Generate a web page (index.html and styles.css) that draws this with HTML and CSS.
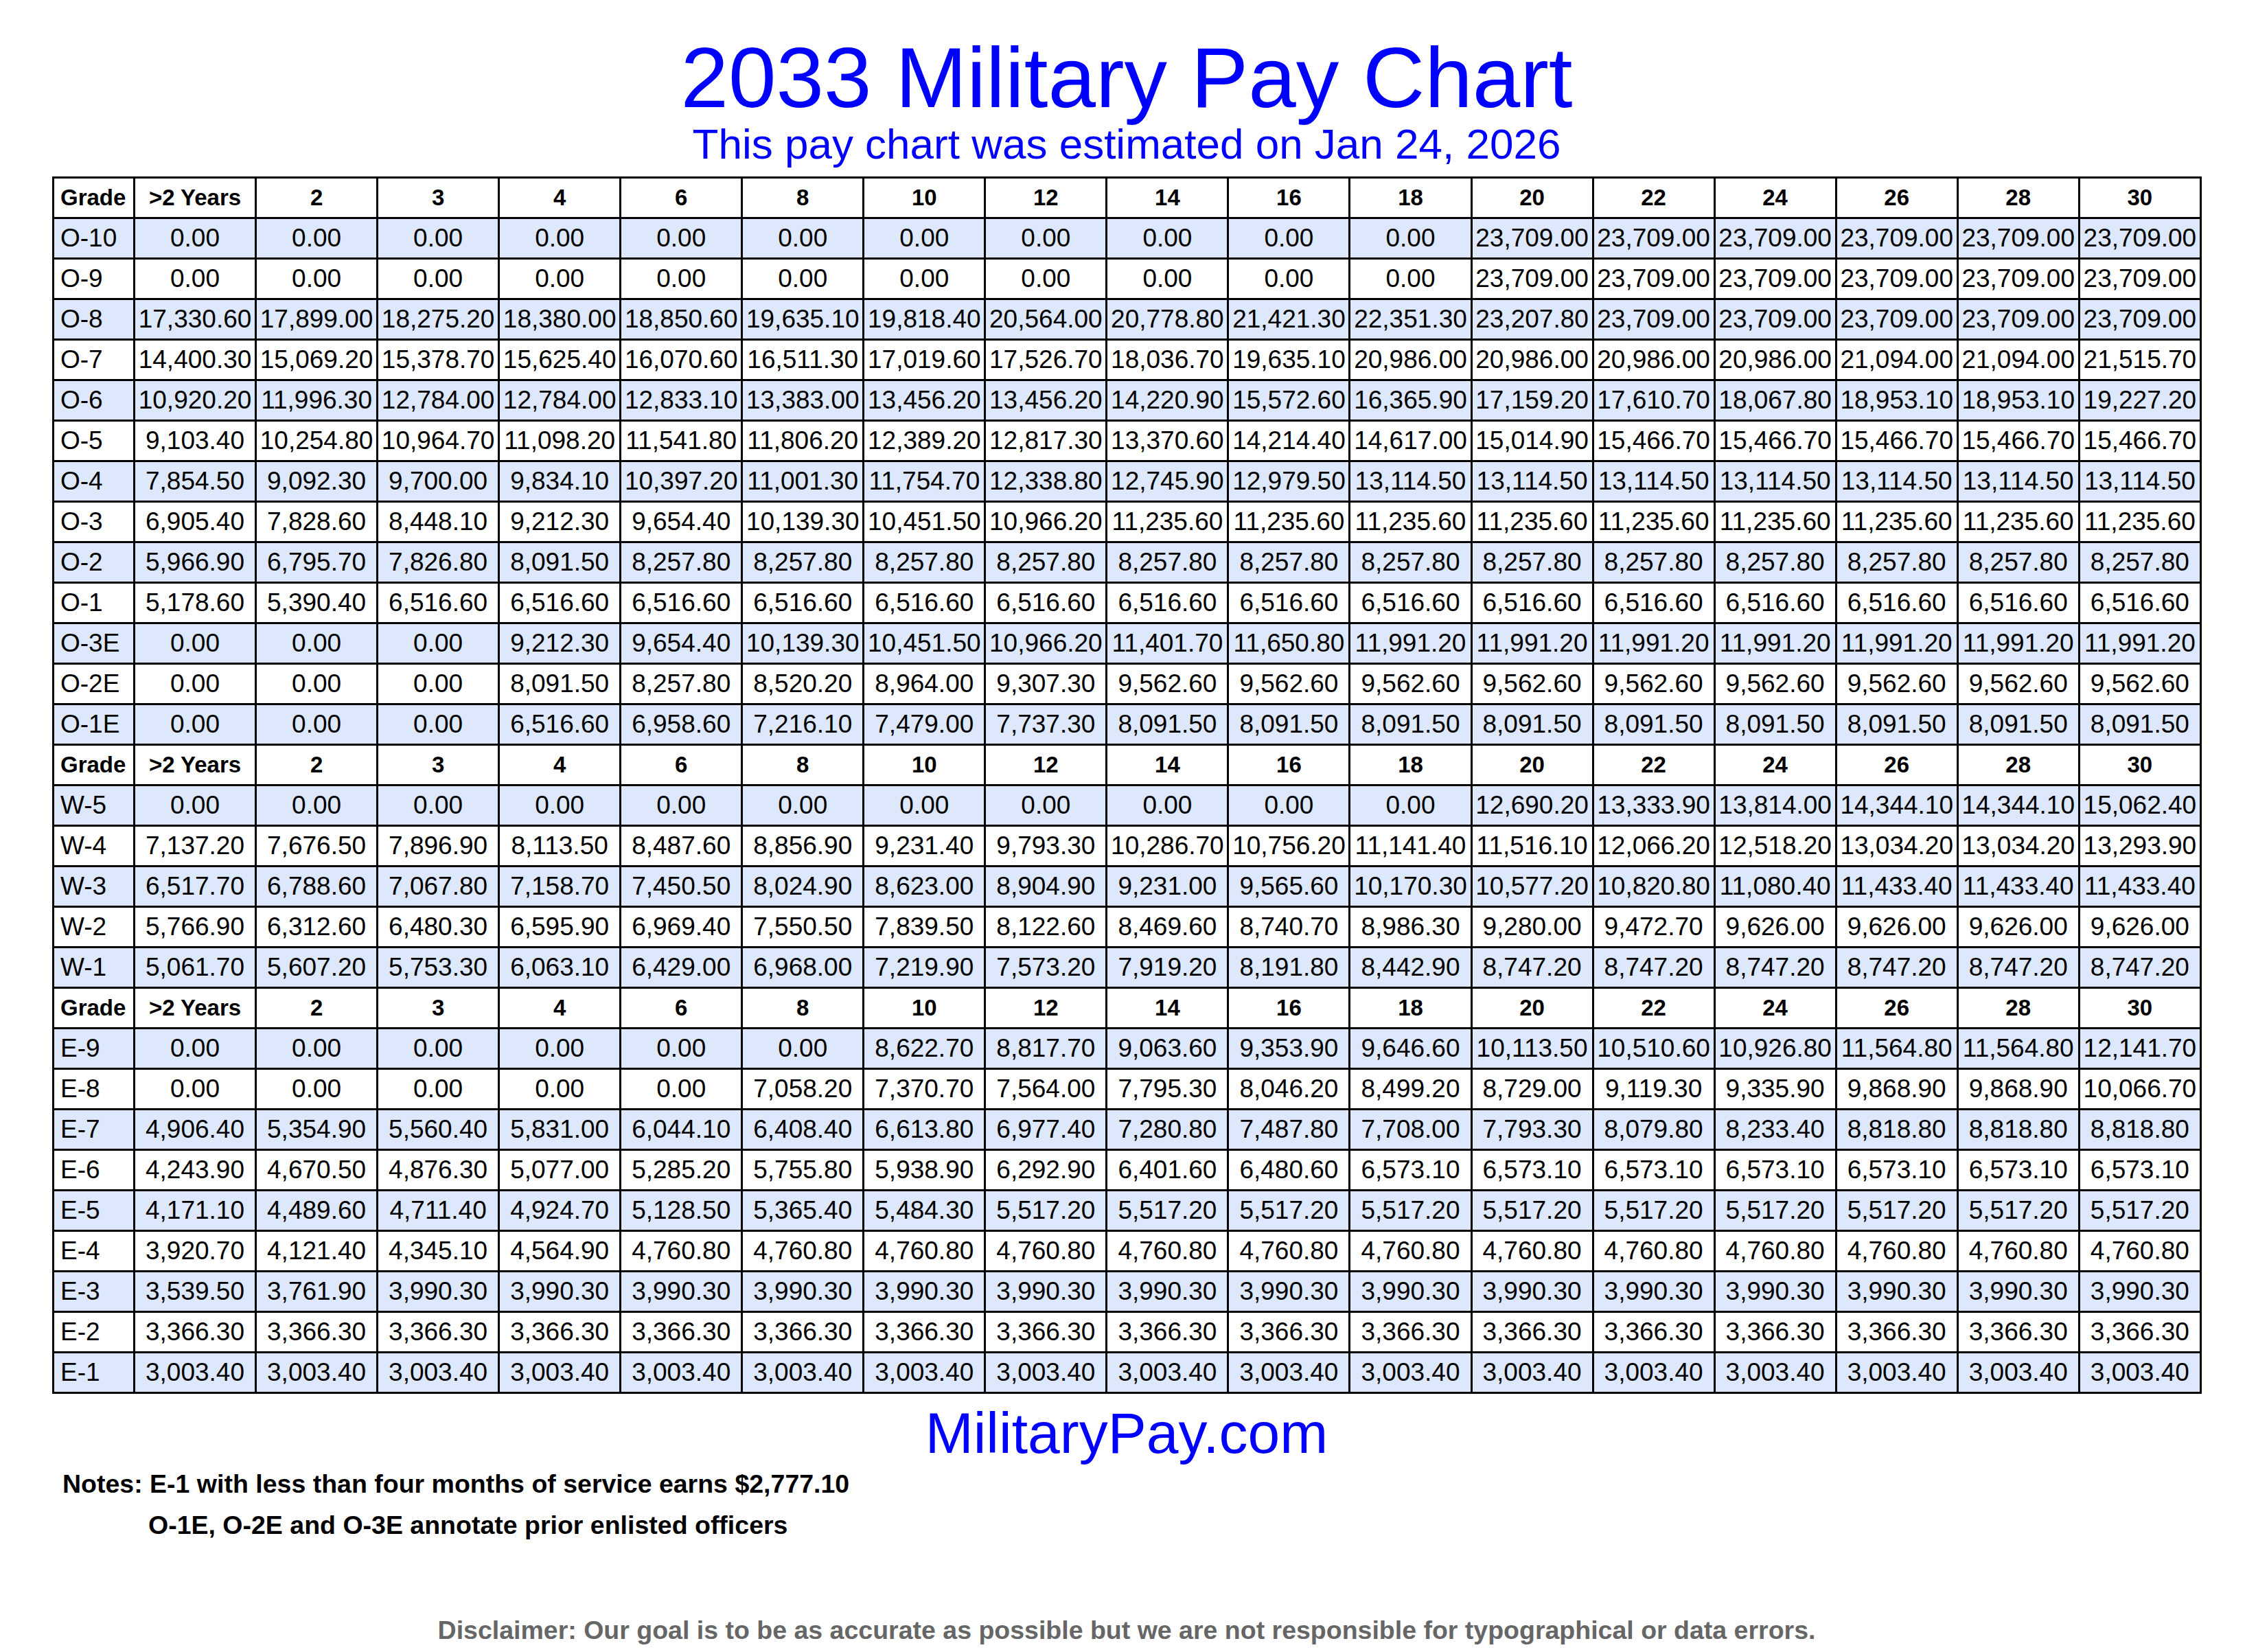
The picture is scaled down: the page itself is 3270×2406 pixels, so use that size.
FILE: index.html
```html
<!DOCTYPE html>
<html lang="en">
<head>
<meta charset="utf-8">
<title>2033 Military Pay Chart</title>
<link rel="stylesheet" href="styles.css">
</head>
<body>
<div class="page">
  <h1 class="title">2033 Military Pay Chart</h1>
  <p class="subtitle">This pay chart was estimated on Jan 24, 2026</p>
  <table class="pay">
    <colgroup><col class="c-grade"><col span="17"></colgroup>
    <tbody>
      <tr class="head"><th>Grade</th><th>&gt;2 Years</th><th>2</th><th>3</th><th>4</th><th>6</th><th>8</th><th>10</th><th>12</th><th>14</th><th>16</th><th>18</th><th>20</th><th>22</th><th>24</th><th>26</th><th>28</th><th>30</th></tr>
      <tr><td>O-10</td><td>0.00</td><td>0.00</td><td>0.00</td><td>0.00</td><td>0.00</td><td>0.00</td><td>0.00</td><td>0.00</td><td>0.00</td><td>0.00</td><td>0.00</td><td>23,709.00</td><td>23,709.00</td><td>23,709.00</td><td>23,709.00</td><td>23,709.00</td><td>23,709.00</td></tr>
      <tr><td>O-9</td><td>0.00</td><td>0.00</td><td>0.00</td><td>0.00</td><td>0.00</td><td>0.00</td><td>0.00</td><td>0.00</td><td>0.00</td><td>0.00</td><td>0.00</td><td>23,709.00</td><td>23,709.00</td><td>23,709.00</td><td>23,709.00</td><td>23,709.00</td><td>23,709.00</td></tr>
      <tr><td>O-8</td><td>17,330.60</td><td>17,899.00</td><td>18,275.20</td><td>18,380.00</td><td>18,850.60</td><td>19,635.10</td><td>19,818.40</td><td>20,564.00</td><td>20,778.80</td><td>21,421.30</td><td>22,351.30</td><td>23,207.80</td><td>23,709.00</td><td>23,709.00</td><td>23,709.00</td><td>23,709.00</td><td>23,709.00</td></tr>
      <tr><td>O-7</td><td>14,400.30</td><td>15,069.20</td><td>15,378.70</td><td>15,625.40</td><td>16,070.60</td><td>16,511.30</td><td>17,019.60</td><td>17,526.70</td><td>18,036.70</td><td>19,635.10</td><td>20,986.00</td><td>20,986.00</td><td>20,986.00</td><td>20,986.00</td><td>21,094.00</td><td>21,094.00</td><td>21,515.70</td></tr>
      <tr><td>O-6</td><td>10,920.20</td><td>11,996.30</td><td>12,784.00</td><td>12,784.00</td><td>12,833.10</td><td>13,383.00</td><td>13,456.20</td><td>13,456.20</td><td>14,220.90</td><td>15,572.60</td><td>16,365.90</td><td>17,159.20</td><td>17,610.70</td><td>18,067.80</td><td>18,953.10</td><td>18,953.10</td><td>19,227.20</td></tr>
      <tr><td>O-5</td><td>9,103.40</td><td>10,254.80</td><td>10,964.70</td><td>11,098.20</td><td>11,541.80</td><td>11,806.20</td><td>12,389.20</td><td>12,817.30</td><td>13,370.60</td><td>14,214.40</td><td>14,617.00</td><td>15,014.90</td><td>15,466.70</td><td>15,466.70</td><td>15,466.70</td><td>15,466.70</td><td>15,466.70</td></tr>
      <tr><td>O-4</td><td>7,854.50</td><td>9,092.30</td><td>9,700.00</td><td>9,834.10</td><td>10,397.20</td><td>11,001.30</td><td>11,754.70</td><td>12,338.80</td><td>12,745.90</td><td>12,979.50</td><td>13,114.50</td><td>13,114.50</td><td>13,114.50</td><td>13,114.50</td><td>13,114.50</td><td>13,114.50</td><td>13,114.50</td></tr>
      <tr><td>O-3</td><td>6,905.40</td><td>7,828.60</td><td>8,448.10</td><td>9,212.30</td><td>9,654.40</td><td>10,139.30</td><td>10,451.50</td><td>10,966.20</td><td>11,235.60</td><td>11,235.60</td><td>11,235.60</td><td>11,235.60</td><td>11,235.60</td><td>11,235.60</td><td>11,235.60</td><td>11,235.60</td><td>11,235.60</td></tr>
      <tr><td>O-2</td><td>5,966.90</td><td>6,795.70</td><td>7,826.80</td><td>8,091.50</td><td>8,257.80</td><td>8,257.80</td><td>8,257.80</td><td>8,257.80</td><td>8,257.80</td><td>8,257.80</td><td>8,257.80</td><td>8,257.80</td><td>8,257.80</td><td>8,257.80</td><td>8,257.80</td><td>8,257.80</td><td>8,257.80</td></tr>
      <tr><td>O-1</td><td>5,178.60</td><td>5,390.40</td><td>6,516.60</td><td>6,516.60</td><td>6,516.60</td><td>6,516.60</td><td>6,516.60</td><td>6,516.60</td><td>6,516.60</td><td>6,516.60</td><td>6,516.60</td><td>6,516.60</td><td>6,516.60</td><td>6,516.60</td><td>6,516.60</td><td>6,516.60</td><td>6,516.60</td></tr>
      <tr><td>O-3E</td><td>0.00</td><td>0.00</td><td>0.00</td><td>9,212.30</td><td>9,654.40</td><td>10,139.30</td><td>10,451.50</td><td>10,966.20</td><td>11,401.70</td><td>11,650.80</td><td>11,991.20</td><td>11,991.20</td><td>11,991.20</td><td>11,991.20</td><td>11,991.20</td><td>11,991.20</td><td>11,991.20</td></tr>
      <tr><td>O-2E</td><td>0.00</td><td>0.00</td><td>0.00</td><td>8,091.50</td><td>8,257.80</td><td>8,520.20</td><td>8,964.00</td><td>9,307.30</td><td>9,562.60</td><td>9,562.60</td><td>9,562.60</td><td>9,562.60</td><td>9,562.60</td><td>9,562.60</td><td>9,562.60</td><td>9,562.60</td><td>9,562.60</td></tr>
      <tr><td>O-1E</td><td>0.00</td><td>0.00</td><td>0.00</td><td>6,516.60</td><td>6,958.60</td><td>7,216.10</td><td>7,479.00</td><td>7,737.30</td><td>8,091.50</td><td>8,091.50</td><td>8,091.50</td><td>8,091.50</td><td>8,091.50</td><td>8,091.50</td><td>8,091.50</td><td>8,091.50</td><td>8,091.50</td></tr>
    </tbody>
    <tbody>
      <tr class="head"><th>Grade</th><th>&gt;2 Years</th><th>2</th><th>3</th><th>4</th><th>6</th><th>8</th><th>10</th><th>12</th><th>14</th><th>16</th><th>18</th><th>20</th><th>22</th><th>24</th><th>26</th><th>28</th><th>30</th></tr>
      <tr><td>W-5</td><td>0.00</td><td>0.00</td><td>0.00</td><td>0.00</td><td>0.00</td><td>0.00</td><td>0.00</td><td>0.00</td><td>0.00</td><td>0.00</td><td>0.00</td><td>12,690.20</td><td>13,333.90</td><td>13,814.00</td><td>14,344.10</td><td>14,344.10</td><td>15,062.40</td></tr>
      <tr><td>W-4</td><td>7,137.20</td><td>7,676.50</td><td>7,896.90</td><td>8,113.50</td><td>8,487.60</td><td>8,856.90</td><td>9,231.40</td><td>9,793.30</td><td>10,286.70</td><td>10,756.20</td><td>11,141.40</td><td>11,516.10</td><td>12,066.20</td><td>12,518.20</td><td>13,034.20</td><td>13,034.20</td><td>13,293.90</td></tr>
      <tr><td>W-3</td><td>6,517.70</td><td>6,788.60</td><td>7,067.80</td><td>7,158.70</td><td>7,450.50</td><td>8,024.90</td><td>8,623.00</td><td>8,904.90</td><td>9,231.00</td><td>9,565.60</td><td>10,170.30</td><td>10,577.20</td><td>10,820.80</td><td>11,080.40</td><td>11,433.40</td><td>11,433.40</td><td>11,433.40</td></tr>
      <tr><td>W-2</td><td>5,766.90</td><td>6,312.60</td><td>6,480.30</td><td>6,595.90</td><td>6,969.40</td><td>7,550.50</td><td>7,839.50</td><td>8,122.60</td><td>8,469.60</td><td>8,740.70</td><td>8,986.30</td><td>9,280.00</td><td>9,472.70</td><td>9,626.00</td><td>9,626.00</td><td>9,626.00</td><td>9,626.00</td></tr>
      <tr><td>W-1</td><td>5,061.70</td><td>5,607.20</td><td>5,753.30</td><td>6,063.10</td><td>6,429.00</td><td>6,968.00</td><td>7,219.90</td><td>7,573.20</td><td>7,919.20</td><td>8,191.80</td><td>8,442.90</td><td>8,747.20</td><td>8,747.20</td><td>8,747.20</td><td>8,747.20</td><td>8,747.20</td><td>8,747.20</td></tr>
    </tbody>
    <tbody>
      <tr class="head"><th>Grade</th><th>&gt;2 Years</th><th>2</th><th>3</th><th>4</th><th>6</th><th>8</th><th>10</th><th>12</th><th>14</th><th>16</th><th>18</th><th>20</th><th>22</th><th>24</th><th>26</th><th>28</th><th>30</th></tr>
      <tr><td>E-9</td><td>0.00</td><td>0.00</td><td>0.00</td><td>0.00</td><td>0.00</td><td>0.00</td><td>8,622.70</td><td>8,817.70</td><td>9,063.60</td><td>9,353.90</td><td>9,646.60</td><td>10,113.50</td><td>10,510.60</td><td>10,926.80</td><td>11,564.80</td><td>11,564.80</td><td>12,141.70</td></tr>
      <tr><td>E-8</td><td>0.00</td><td>0.00</td><td>0.00</td><td>0.00</td><td>0.00</td><td>7,058.20</td><td>7,370.70</td><td>7,564.00</td><td>7,795.30</td><td>8,046.20</td><td>8,499.20</td><td>8,729.00</td><td>9,119.30</td><td>9,335.90</td><td>9,868.90</td><td>9,868.90</td><td>10,066.70</td></tr>
      <tr><td>E-7</td><td>4,906.40</td><td>5,354.90</td><td>5,560.40</td><td>5,831.00</td><td>6,044.10</td><td>6,408.40</td><td>6,613.80</td><td>6,977.40</td><td>7,280.80</td><td>7,487.80</td><td>7,708.00</td><td>7,793.30</td><td>8,079.80</td><td>8,233.40</td><td>8,818.80</td><td>8,818.80</td><td>8,818.80</td></tr>
      <tr><td>E-6</td><td>4,243.90</td><td>4,670.50</td><td>4,876.30</td><td>5,077.00</td><td>5,285.20</td><td>5,755.80</td><td>5,938.90</td><td>6,292.90</td><td>6,401.60</td><td>6,480.60</td><td>6,573.10</td><td>6,573.10</td><td>6,573.10</td><td>6,573.10</td><td>6,573.10</td><td>6,573.10</td><td>6,573.10</td></tr>
      <tr><td>E-5</td><td>4,171.10</td><td>4,489.60</td><td>4,711.40</td><td>4,924.70</td><td>5,128.50</td><td>5,365.40</td><td>5,484.30</td><td>5,517.20</td><td>5,517.20</td><td>5,517.20</td><td>5,517.20</td><td>5,517.20</td><td>5,517.20</td><td>5,517.20</td><td>5,517.20</td><td>5,517.20</td><td>5,517.20</td></tr>
      <tr><td>E-4</td><td>3,920.70</td><td>4,121.40</td><td>4,345.10</td><td>4,564.90</td><td>4,760.80</td><td>4,760.80</td><td>4,760.80</td><td>4,760.80</td><td>4,760.80</td><td>4,760.80</td><td>4,760.80</td><td>4,760.80</td><td>4,760.80</td><td>4,760.80</td><td>4,760.80</td><td>4,760.80</td><td>4,760.80</td></tr>
      <tr><td>E-3</td><td>3,539.50</td><td>3,761.90</td><td>3,990.30</td><td>3,990.30</td><td>3,990.30</td><td>3,990.30</td><td>3,990.30</td><td>3,990.30</td><td>3,990.30</td><td>3,990.30</td><td>3,990.30</td><td>3,990.30</td><td>3,990.30</td><td>3,990.30</td><td>3,990.30</td><td>3,990.30</td><td>3,990.30</td></tr>
      <tr><td>E-2</td><td>3,366.30</td><td>3,366.30</td><td>3,366.30</td><td>3,366.30</td><td>3,366.30</td><td>3,366.30</td><td>3,366.30</td><td>3,366.30</td><td>3,366.30</td><td>3,366.30</td><td>3,366.30</td><td>3,366.30</td><td>3,366.30</td><td>3,366.30</td><td>3,366.30</td><td>3,366.30</td><td>3,366.30</td></tr>
      <tr><td>E-1</td><td>3,003.40</td><td>3,003.40</td><td>3,003.40</td><td>3,003.40</td><td>3,003.40</td><td>3,003.40</td><td>3,003.40</td><td>3,003.40</td><td>3,003.40</td><td>3,003.40</td><td>3,003.40</td><td>3,003.40</td><td>3,003.40</td><td>3,003.40</td><td>3,003.40</td><td>3,003.40</td><td>3,003.40</td></tr>
    </tbody>
  </table>
  <p class="site">MilitaryPay.com</p>
  <div class="notes">
    <p class="note">Notes: E-1 with less than four months of service earns $2,777.10</p>
    <p class="note note-indent">O-1E, O-2E and O-3E annotate prior enlisted officers</p>
  </div>
  <p class="disclaimer">Disclaimer: Our goal is to be as accurate as possible but we are not responsible for typographical or data errors.</p>
</div>
</body>
</html>
```

FILE: styles.css
```css
html, body {
  margin: 0;
  padding: 0;
  background: #ffffff;
}

body {
  font-family: "Liberation Sans", Arial, Helvetica, sans-serif;
  color: #000000;
}

.page {
  width: 3130px;
  margin-left: 76px;
  padding-top: 50px;
}

.title {
  margin: 0;
  font-size: 125px;
  font-weight: normal;
  line-height: 1;
  color: #0000ff;
  text-align: center;
}

.subtitle {
  margin: 4px 0 0;
  font-size: 62px;
  line-height: 1;
  color: #0000ff;
  text-align: center;
}

.pay {
  margin-top: 16px;
  width: 3131px;
  table-layout: fixed;
  border-collapse: collapse;
  border: 3px solid #000;
}

.c-grade {
  width: 118px;
}

.pay th,
.pay td {
  border: 3px solid #000;
  padding: 0;
  height: 56px;
  line-height: 56px;
  text-align: center;
  white-space: nowrap;
  overflow: hidden;
}

.pay th {
  font-size: 33px;
  font-weight: bold;
  background: #ffffff;
}

.pay td {
  font-size: 37px;
}

.pay th:first-child,
.pay td:first-child {
  text-align: left;
  padding-left: 9px;
}

.pay tbody tr:nth-child(even) td {
  background: #dde8fc;
}

.site {
  margin: 15px 0 0;
  font-size: 84px;
  line-height: 1;
  color: #0000ff;
  text-align: center;
}

.notes {
  margin-top: 2px;
}

.note {
  margin: 0;
  font-size: 37.5px;
  font-weight: bold;
  line-height: 60px;
  padding-left: 15px;
}

.note-indent {
  padding-left: 140px;
}

.disclaimer {
  margin: 93px 0 0;
  font-size: 37.5px;
  font-weight: bold;
  line-height: 60px;
  color: #666666;
  text-align: center;
}
```
